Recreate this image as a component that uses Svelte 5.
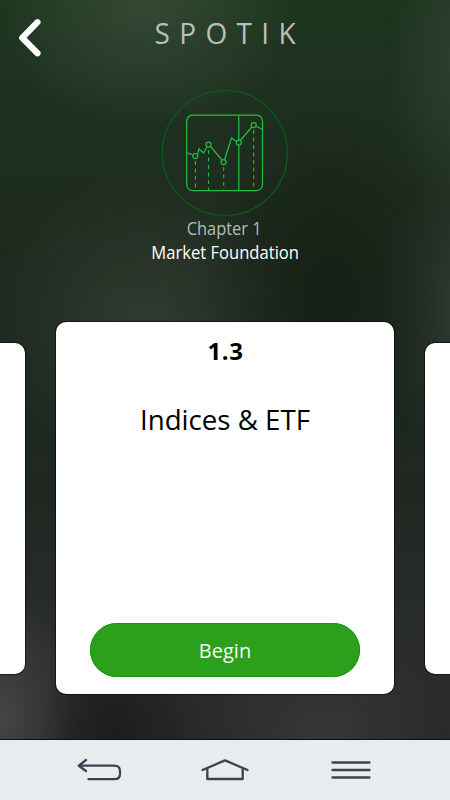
<script>
  const points = [[195.3, 156], [208.6, 144.5], [223.6, 162], [238.8, 142.5], [253.7, 125]];
</script>

<div class="screen">
  <header>
    <button class="back" aria-label="Back">
      <svg width="26" height="42" viewBox="0 0 26 42"><path d="M20.500 5.200 5.200 20.800 20.500 36.200" /></svg>
    </button>
    <h1><span>SPOTIK</span></h1>
  </header>

  <section class="chapter">
    <svg class="emblem" width="128" height="128" viewBox="161 89 128 128">
      <circle class="ring" cx="224.8" cy="153" r="62.5" />
      <rect x="186.7" y="115" width="75.8" height="75.6" rx="6" />
      <path d="M187 153l5.500 1.700M197.500 154.500l1.500-5.500 4.500 4 3.500-6M210.500 146.500l11.500 13.500M224.500 160l7-22 5 3.500M240.300 140.500l11.500-13.500M255.500 126l7 3.300M238.800 115v25.300M238.800 145v45" />
      <path class="dash" d="M195.400 161v29M208.600 150v40M223.700 167v23M253.700 130v60" />
      {#each points as [x, y]}
        <circle cx={x} cy={y} r="2.5" />
      {/each}
    </svg>
    <p class="number"><span>Chapter 1</span></p>
    <p class="name"><span>Market Foundation</span></p>
  </section>

  <main>
    <article class="card side"></article>
    <article class="card">
      <h2><span>1.3</span></h2>
      <h3><span>Indices &amp; ETF</span></h3>
      <button class="begin"><span>Begin</span></button>
    </article>
    <article class="card side"></article>
  </main>

  <nav>
    <svg width="46" height="26" viewBox="0 0 46 26"><path d="M10 3 2.800 8.700 10 14M3 8.700H38.500q5.500 0 5.500 5.500v2.500q0 5.500-5.500 5.500H12.500" /></svg>
    <svg width="50" height="26" viewBox="0 0 50 26"><path d="M2.500 13 25 3.400l22.500 9.600M7.300 11.500v10.500h35.400V11.500" /></svg>
    <svg class="menu" width="42" height="26" viewBox="0 0 42 26"><path d="M2.500 5.500h37M2.500 13h37M2.500 20.500h37" /></svg>
  </nav>
</div>

<style>
  .screen {
    width: 450px;
    height: 800px;
    overflow: hidden;
    display: flex;
    flex-direction: column;
    font-family: "Open Sans", "Noto Sans", sans-serif;
    background:
      radial-gradient(ellipse 160px 125px at 145px 5px, #374c38e0, #384d3970 50%, #3b503c00),
      radial-gradient(ellipse 130px 210px at 330px 295px, #151e14e0, #161f1570 50%, #141d1300),
      radial-gradient(ellipse 160px 150px at 145px 320px, #333c32e0, #333c3270 50%, #353f3400),
      radial-gradient(ellipse 80px 160px at 465px 60px, #344636c0, #34463600),
      radial-gradient(ellipse 80px 150px at 460px 310px, #313b32, #313b3200),
      radial-gradient(ellipse 75px 110px at 115px 730px, #1d1d1d, #1c1c1c00),
      radial-gradient(ellipse 85px 130px at 0px 718px, #444544, #47474700),
      radial-gradient(ellipse 155px 100px at 325px 728px, #373637, #37363700),
      linear-gradient(#1b341d 0, #1e3120 90px, #1d2c1f 200px, #1c281e 330px, #202721 500px, #292d29 640px, #262626 738px);
  }
  h1, h2, h3, p { margin: 0; font-weight: 400; }
  span { display: inline-block; white-space: nowrap; }
  button { border: 0; padding: 0; font: inherit; }
  svg { display: block; fill: none; flex: none; }
  header {
    height: 68px;
    flex: none;
    display: grid;
    grid-template-columns: 60px 1fr 60px;
    align-items: start;
  }
  .back { background: none; padding: 17px 0 0 17px; width: 60px; }
  .back path { stroke: #fff; stroke-width: 6.200; stroke-linecap: round; stroke-linejoin: round; }
  h1 {
    text-align: center;
    color: #bbbdbb;
    font-size: 29px;
    line-height: 66px;
    letter-spacing: 9.700px;
  }
  h1 span { padding-left: 10px; transform: scaleX(.965); }
  .chapter {
    height: 254px;
    flex: none;
    box-sizing: border-box;
    padding-top: 21px;
    display: flex;
    flex-direction: column;
    align-items: center;
  }
  .emblem { stroke: #21bd43; stroke-width: 1.25; }
  .ring { stroke: #075f16; stroke-width: 1.200; }
  .dash { stroke-dasharray: 4 3.500; stroke-width: 1.100; }
  .number, .name { font-size: 18px; line-height: 24px; }
  .number { color: #b7bab7; padding-right: 2px; margin-top: -1px; }
  .name { color: #fff; }
  .number span { transform: scaleX(.91); }
  .name span { transform: scaleX(.922); }
  main {
    height: 417px;
    flex: none;
    display: flex;
    justify-content: center;
    align-items: flex-start;
    gap: 31px;
  }
  .card {
    width: 338px;
    height: 372px;
    flex: none;
    box-sizing: border-box;
    border-radius: 10px;
    background: #fff;
    box-shadow: 0 0 0 1px #080e09aa;
    color: #000;
    display: flex;
    flex-direction: column;
    align-items: center;
  }
  .side { height: 331px; margin-top: 21px; }
  h2 { font-size: 24px; line-height: 58px; font-weight: 700; letter-spacing: .500px; }
  h2 span { padding-left: 1px; }
  h3 { font-size: 27px; line-height: 40px; margin-top: 20px; }
  h3 span { transform: scaleX(1.025); }
  .begin {
    width: 270px;
    height: 54px;
    margin-top: auto;
    margin-bottom: 17px;
    border-radius: 27px;
    background: #2c9f1d;
    box-shadow: inset 0 0 0 1px #13980d;
    color: #f4fbf3;
    font-size: 20px;
  }
  .begin span { padding-top: 1px; }
  nav {
    height: 61px;
    flex: none;
    box-sizing: border-box;
    border-top: 1px solid #111;
    padding-left: 76px;
    background: #e8ecef;
    display: flex;
    align-items: center;
    gap: 78px;
  }
  nav path { stroke: #3d4250; stroke-width: 2.300; stroke-linecap: round; stroke-linejoin: round; }
  .menu { margin-left: 2px; }
</style>
